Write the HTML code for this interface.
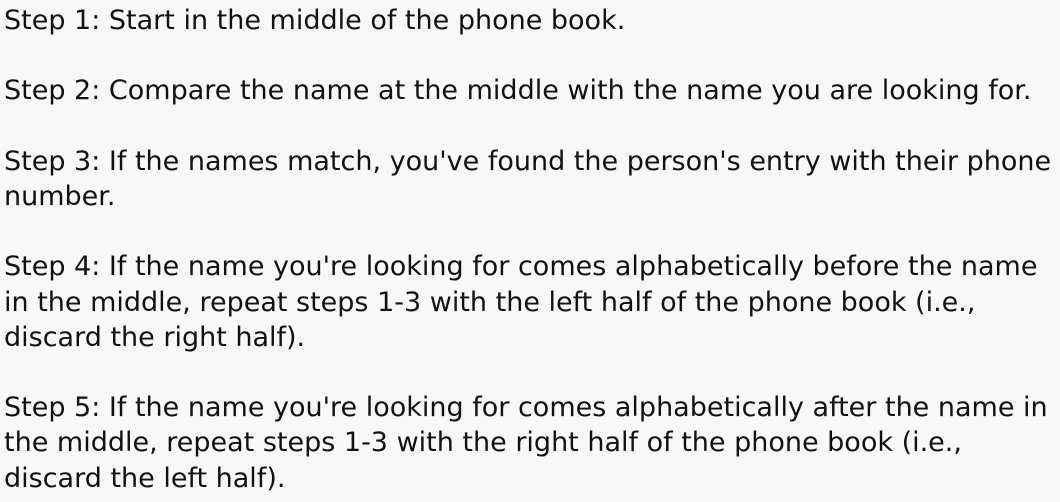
<!DOCTYPE html>
<html><head><meta charset="utf-8"><style>
html,body{margin:0;padding:0;background:#f8f8f8;}
body{width:1060px;height:502px;overflow:hidden;font-family:"DejaVu Sans",sans-serif;font-size:27px;line-height:35.2px;color:#111;padding:3px 0 0 4px;box-sizing:border-box;}
p{margin:0 0 35.2px 0;width:1054px;}
</style></head><body>
<p>Step 1: Start in the middle of the phone book.</p>
<p>Step 2: Compare the name at the middle with the name you are looking for.</p>
<p>Step 3: If the names match, you've found the person's entry with their phone number.</p>
<p>Step 4: If the name you're looking for comes alphabetically before the name in the middle, repeat steps 1-3 with the left half of the phone book (i.e., discard the right half).</p>
<p>Step 5: If the name you're looking for comes alphabetically after the name in the middle, repeat steps 1-3 with the right half of the phone book (i.e., discard the left half).</p>
</body></html>
